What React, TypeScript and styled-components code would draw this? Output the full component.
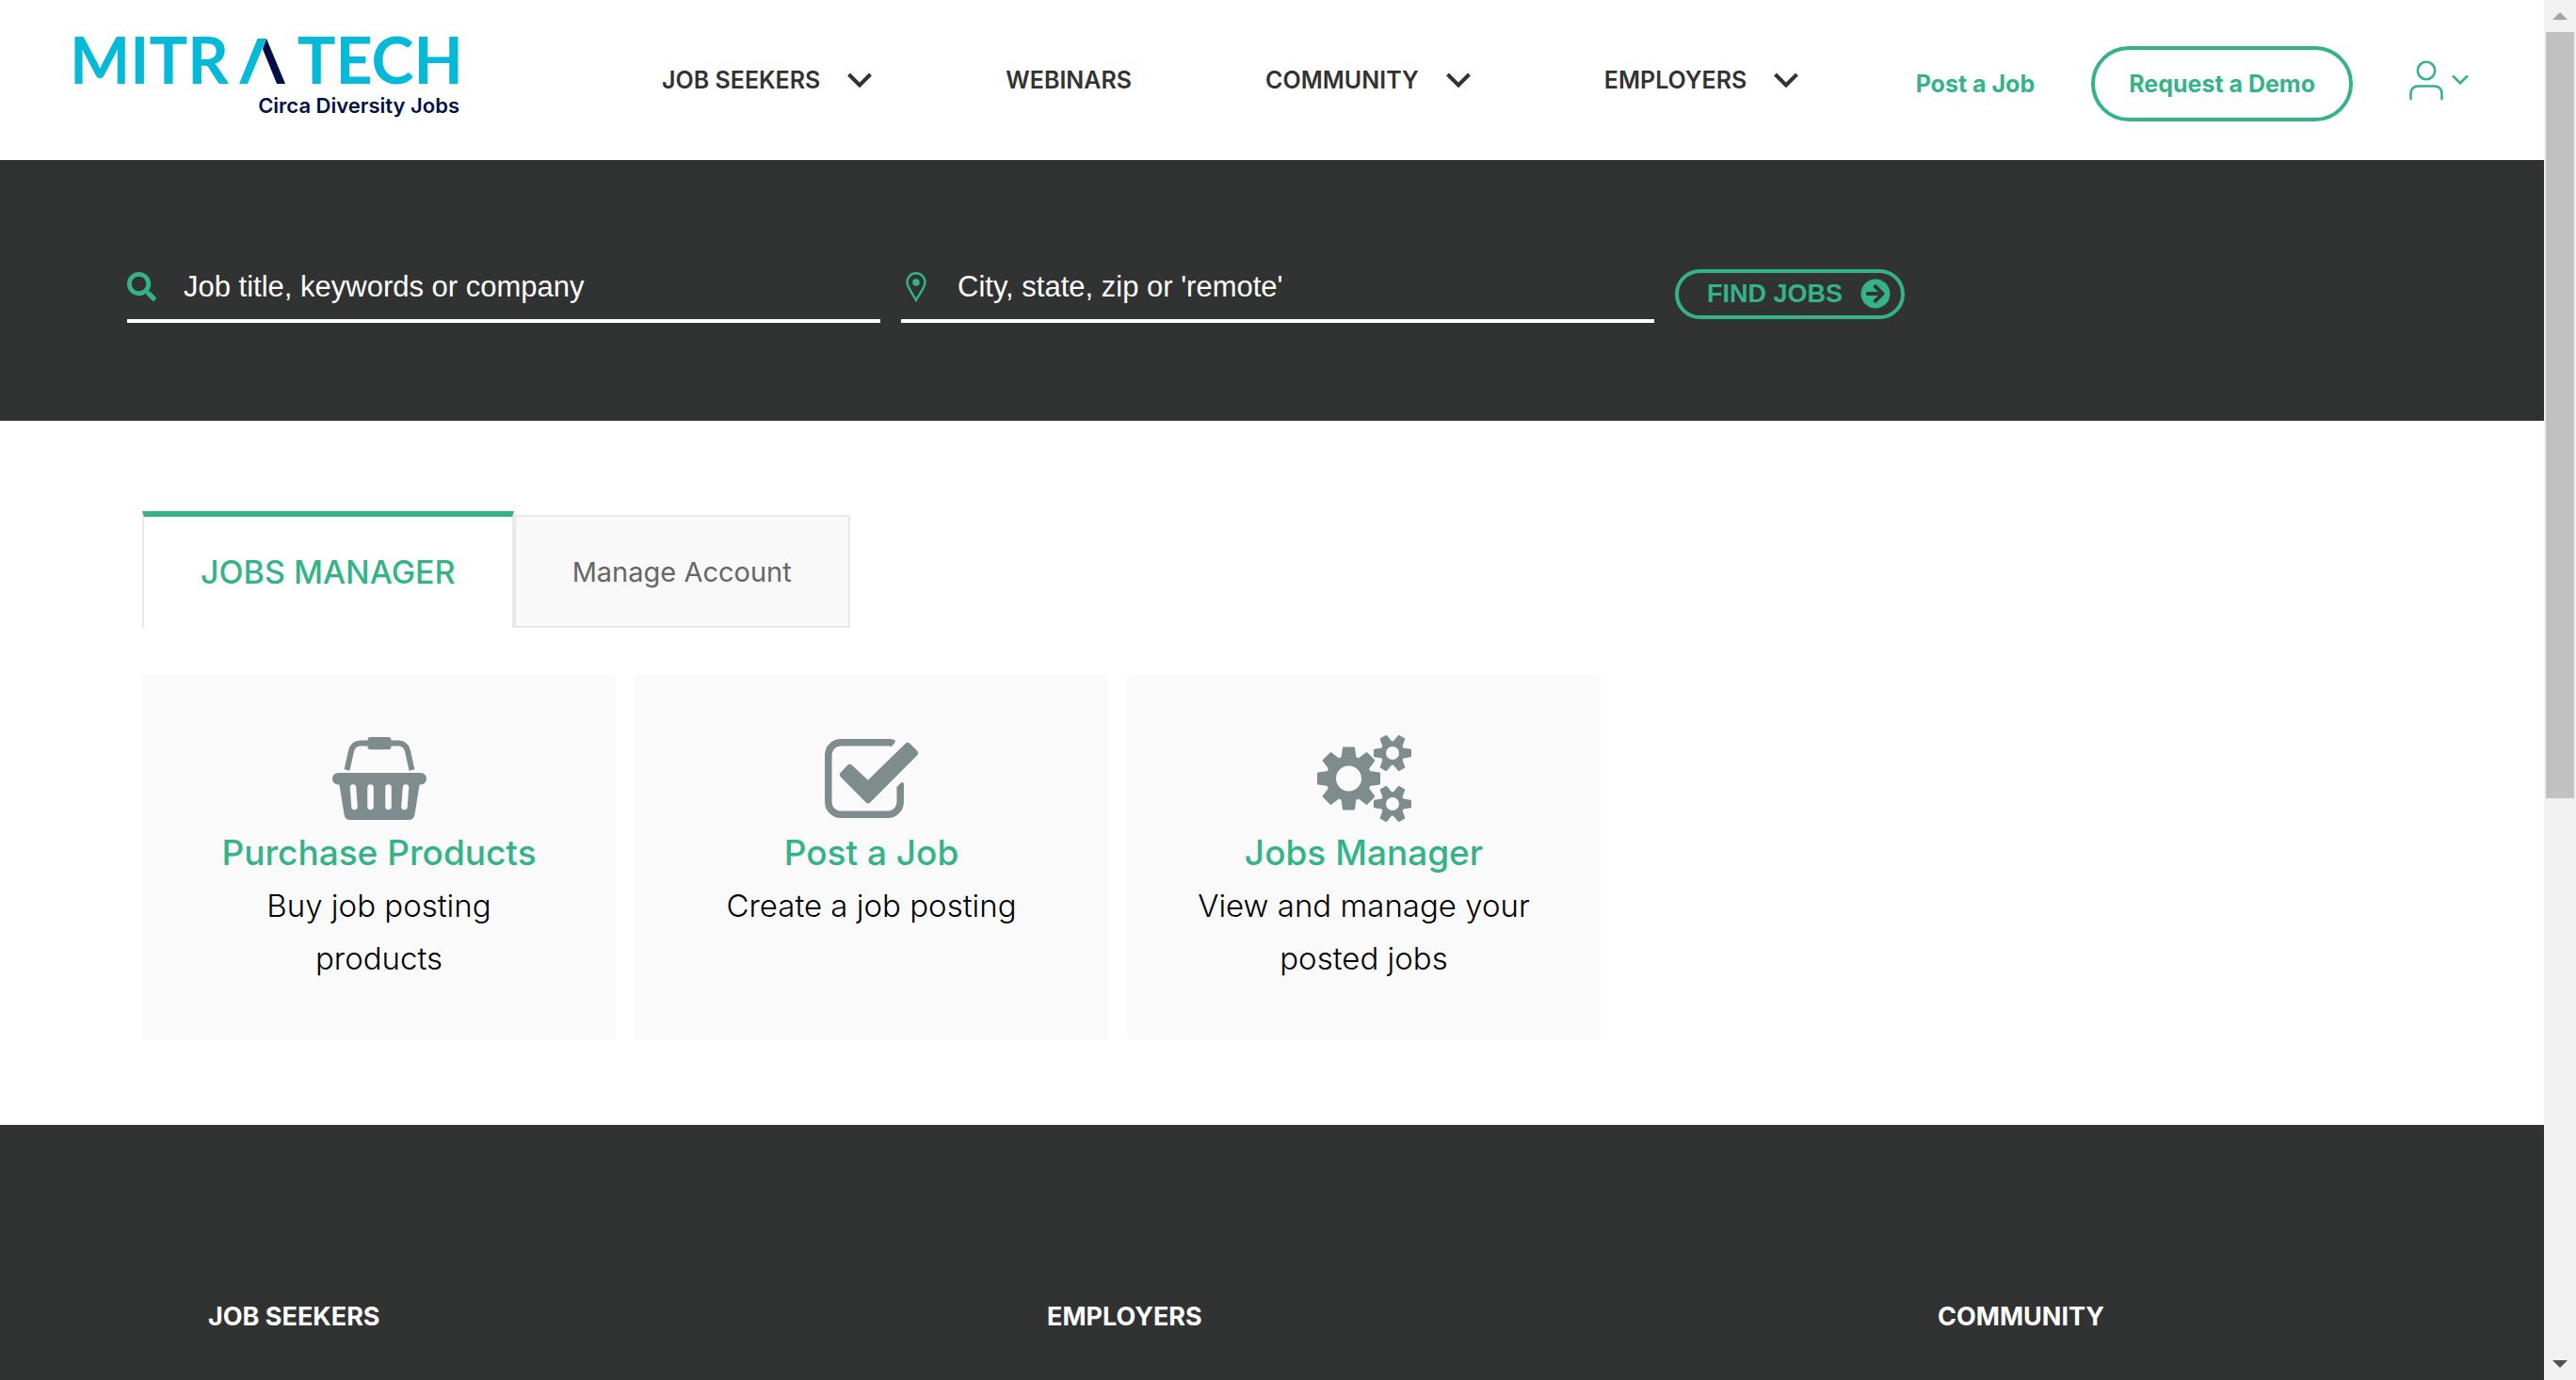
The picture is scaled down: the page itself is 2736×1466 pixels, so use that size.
import React from "react";
import styled, { createGlobalStyle } from "styled-components";
import { FaArrowCircleRight, FaSearch } from "react-icons/fa";

const green = "#34b389";
const charcoal = "#313332";
const slate = "#7f8c8d";
const sans = `Inter, "Noto Sans", sans-serif`;

const GlobalStyle = createGlobalStyle`
  *, *::before, *::after { box-sizing: border-box; }
  body { margin: 0; background: #fff; font-family: ${sans}; }
  a { color: inherit; text-decoration: none; }
  button { font: inherit; color: inherit; background: none; border: 0; padding: 0; cursor: pointer; }
  h2, h3, p { margin: 0; }
  svg { display: block; flex: none; }
`;

const Shell = styled.div`
  display: grid;
  grid-template-columns: minmax(0, 1fr) 34px;
  height: 100vh;
  overflow: hidden;
`;

const Page = styled.div`
  display: flex;
  flex-direction: column;
  min-height: 0;
  overflow: hidden;
`;

const Header = styled.header`
  display: flex;
  align-items: flex-start;
  flex: none;
  height: 170px;
  padding: 40px 80px 0 74px;
`;

const Logo = styled.a`
  display: flex;
  flex-direction: column;
  width: 418px;
  margin-right: 211px;
`;

const Wordmark = styled.span`
  display: flex;
  align-items: baseline;
  justify-content: space-between;
  font: 700 68px/46px Lato, sans-serif;
  color: #05b9d8;
`;

const Tagline = styled.span`
  font-size: 22px;
  font-weight: 600;
  line-height: 28px;
  margin-top: 9px;
  padding-right: 4px;
  text-align: right;
  color: #020f47;
`;

const Nav = styled.nav`
  display: flex;
  gap: 142px;
  padding-top: 30px;
`;

const NavItem = styled.button`
  display: flex;
  align-items: center;
  gap: 29px;
  font-size: 25px;
  font-weight: 600;
  line-height: 30px;
  color: ${charcoal};
`;

const Actions = styled.div`
  display: flex;
  align-items: center;
  gap: 60px;
  height: 80px;
  margin-top: 9px;
  margin-left: auto;
  color: ${green};
  font-size: 25px;
  font-weight: 700;
`;

const DemoLink = styled.a`
  display: flex;
  align-items: center;
  height: 80px;
  padding: 0 36px;
  border: 4px solid ${green};
  border-radius: 40px;
`;

const AccountButton = styled.button`
  display: flex;
  align-items: center;
  gap: 9px;
  padding-bottom: 8px;
`;

const SearchBand = styled.form`
  display: flex;
  align-items: flex-start;
  gap: 22px;
  flex: none;
  height: 277px;
  padding: 112px 135px 0;
  background: ${charcoal};
  color: ${green};
`;

const Field = styled.label`
  display: flex;
  align-items: center;
  gap: 29px;
  flex: 0 1 800px;
  height: 61px;
  padding-bottom: 12px;
  border-bottom: 4px solid #fff;
`;

const FieldIcon = styled.span`
  display: flex;
  justify-content: center;
  width: 31px;
`;

const FieldInput = styled.input`
  flex: 1;
  min-width: 0;
  padding: 0;
  border: 0;
  outline: 0;
  background: transparent;
  color: #fff;
  font: 31px/40px "Liberation Sans", Arial, sans-serif;
  &::placeholder { color: #fff; opacity: 1; }
`;

const FindButton = styled.button`
  display: flex;
  align-items: center;
  gap: 19px;
  height: 53px;
  margin-top: 4px;
  padding: 0 11px 2px 30px;
  border: 4px solid ${green};
  border-radius: 27px;
  font: 700 27px/40px "Liberation Sans", Arial, sans-serif;
`;

const Main = styled.main`
  flex: none;
  padding: 96px 151px 90px;
`;

const Tabs = styled.div`
  display: flex;
  align-items: flex-end;
`;

const Tab = styled.button<{ $active?: boolean }>`
  height: ${(p) => (p.$active ? 124 : 120)}px;
  padding: 0 60px ${(p) => (p.$active ? 2 : 0)}px;
  border: 2px solid #e9e9e9;
  border-width: ${(p) => (p.$active ? "6px 2px 0" : "2px")};
  border-top-color: ${(p) => (p.$active ? green : "#e9e9e9")};
  background: ${(p) => (p.$active ? "#fff" : "#f9f9f9")};
  color: ${(p) => (p.$active ? green : "#666")};
  font-size: ${(p) => (p.$active ? 34 : 29)}px;
  font-weight: ${(p) => (p.$active ? 500 : 400)};
`;

const Cards = styled.div`
  display: flex;
  gap: 20px;
  margin-top: 50px;
`;

const Card = styled.a`
  display: flex;
  flex-direction: column;
  align-items: center;
  flex: 0 1 503px;
  height: 388px;
  padding: 62px 64px 0;
  background: #fafafa;
  text-align: center;
`;

const IconSlot = styled.span`
  display: flex;
  align-items: center;
  height: 96px;
`;

const CardTitle = styled.h3`
  margin-top: 9px;
  font-size: 37px;
  font-weight: 500;
  line-height: 44px;
  color: ${green};
`;

const CardText = styled.p`
  margin-top: 6px;
  font-size: 33px;
  font-weight: 300;
  line-height: 56px;
  color: #000;
`;

const Footer = styled.footer`
  display: grid;
  grid-template-columns: 891fr 946fr 644fr;
  flex: 1 0 auto;
  padding: 187px 0 0 221px;
  background: ${charcoal};
  color: #fff;
`;

const FooterHeading = styled.h2`
  font-size: 27px;
  font-weight: 700;
  line-height: 34px;
`;

const ScrollTrack = styled.div`
  display: flex;
  flex-direction: column;
  padding: 0 2px;
  background: #f1f1f1;
`;

const ScrollArrow = styled.span<{ $color: string }>`
  display: flex;
  align-items: center;
  justify-content: center;
  flex: none;
  height: 34px;
  color: ${(p) => p.$color};
`;

const ScrollRun = styled.div`
  flex: 1;
`;

const ScrollThumb = styled.div`
  height: 58.2%;
  background: #c1c1c1;
`;

const Chevron = ({ width, stroke }: { width: number; stroke: number }) => (
  <svg width={width} height={(width * 16) / 26} viewBox="0 0 26 16" fill="none" stroke="currentColor" strokeWidth={stroke}>
    <path d="M1.5 2 L13 13.5 L24.5 2" />
  </svg>
);

const Peak = () => (
  <svg width="50" height="48" viewBox="0 0 50 48">
    <path d="M0 48 L19.5 0 H29 L9 48Z" fill="#05b9d8" />
    <path d="M29 0 L49 48 H40 L25 11Z" fill="#020f47" />
  </svg>
);

const UserIcon = () => (
  <svg width="36" height="43" viewBox="0 0 36 43" fill="none" stroke="currentColor" strokeWidth="2.6" strokeLinecap="round">
    <circle cx="18" cy="11" r="9.2" />
    <path d="M1.5 41 V36 C1.5 30 5 27.5 10 27.5 H26 C31 27.5 34.5 30 34.5 36 V41" />
  </svg>
);

const PinIcon = () => (
  <svg width="22" height="32" viewBox="0 0 22 32" fill="none" stroke="currentColor" strokeWidth="2.4">
    <path d="M11 30 C7 22 1.5 16.500 1.5 10.800 A9.500 9.500 0 0 1 20.500 10.800 C20.500 16.500 15 22 11 30Z" />
    <circle cx="11" cy="11" r="3.800" fill="currentColor" stroke="none" />
  </svg>
);

const BasketIcon = () => (
  <svg width="100" height="88" viewBox="0 0 100 88" fill={slate}>
    <path d="M15.500 35 L20 15 Q22 6.500 30 6.500 H70 Q78 6.500 80 15 L84.500 35" fill="none" stroke={slate} strokeWidth="6" />
    <rect x="37.500" y="0" width="25" height="13.300" rx="3" />
    <rect x="0" y="38" width="100" height="12.500" rx="6.200" />
    <path d="M7 48 L12.500 82 Q13.500 88 19 88 H81 Q86.500 88 87.500 82 L93 48Z" />
    <path d="M22 53.500 L23.500 74 M40.500 53.500 V74 M59.500 53.500 V74 M78 53.500 L76.500 74" stroke="#fafafa" strokeWidth="6.500" strokeLinecap="round" />
  </svg>
);

const CheckIcon = () => (
  <svg width="100" height="84" viewBox="0 0 100 84" fill={slate}>
    <path d="M70 3.800 H17 A13.200 13.200 0 0 0 3.800 17 V67 A13.200 13.200 0 0 0 17 80.200 H67 A13.200 13.200 0 0 0 80.200 67 V52" fill="none" stroke={slate} strokeWidth="7.500" />
    <path d="M69 0 Q74 .5 75 2 Q75 3.500 71 8 H69Z M76.500 53 V51 L81 46.500 Q84 45 84 49 V53Z" />
    <path d="M19.500 38 L26.600 30.500 L46 48.500 L88 7.500 L95.500 15 L46 64.700Z" stroke={slate} strokeWidth="7" strokeLinejoin="round" />
  </svg>
);

/** Closed outline of a cog: each tooth tapers from its base to its tip. */
const cogPath = (cx: number, cy: number, teeth: number, tip: number, root: number, tipHalf: number, rootHalf: number) => {
  const points: string[] = [];
  for (let i = 0; i < teeth; i += 1) {
    const angle = (i * 2 * Math.PI) / teeth;
    const put = (r: number, side: number) =>
      points.push(
        `${(cx + r * Math.cos(angle) - side * Math.sin(angle)).toFixed(2)} ${(cy + r * Math.sin(angle) + side * Math.cos(angle)).toFixed(2)}`
      );
    put(root, -rootHalf);
    put(tip, -tipHalf);
    put(tip, tipHalf);
    put(root, rootHalf);
  }
  return `M${points.join(" L")}Z`;
};

const GearsIcon = () => (
  <svg width="100" height="92" viewBox="0 0 100 92" fill={slate} stroke={slate} strokeWidth="2" strokeLinejoin="round">
    <path d={cogPath(33.5, 46, 8, 32.5, 22, 5.5, 7)} />
    <path d={cogPath(80, 19, 6, 19, 11, 3.2, 4.6)} />
    <path d={cogPath(80, 73, 6, 19, 11, 3.2, 4.6)} />
    <g fill="#fafafa" stroke="none">
      <circle cx="33.500" cy="46" r="13.500" />
      <circle cx="80" cy="19" r="7" />
      <circle cx="80" cy="73" r="7" />
    </g>
  </svg>
);

const navItems = [
  { label: "JOB SEEKERS", menu: true },
  { label: "WEBINARS", menu: false },
  { label: "COMMUNITY", menu: true },
  { label: "EMPLOYERS", menu: true },
];

const cards = [
  { title: "Purchase Products", text: "Buy job posting products", icon: <BasketIcon /> },
  { title: "Post a Job", text: "Create a job posting", icon: <CheckIcon /> },
  { title: "Jobs Manager", text: "View and manage your posted jobs", icon: <GearsIcon /> },
];

export default function App() {
  return (
    <>
      <GlobalStyle />
      <Shell>
        <Page>
          <Header>
            <Logo href="#home">
              <Wordmark>
                <span>MITR</span>
                <Peak />
                <span>TECH</span>
              </Wordmark>
              <Tagline>Circa Diversity Jobs</Tagline>
            </Logo>
            <Nav>
              {navItems.map((item) => (
                <NavItem key={item.label} type="button">
                  {item.label}
                  {item.menu && <Chevron width={26} stroke={4} />}
                </NavItem>
              ))}
            </Nav>
            <Actions>
              <a href="#post">Post a Job</a>
              <DemoLink href="#demo">Request a Demo</DemoLink>
              <AccountButton type="button" aria-label="Account">
                <UserIcon />
                <Chevron width={18} stroke={4} />
              </AccountButton>
            </Actions>
          </Header>

          <SearchBand>
            <Field>
              <FieldIcon><FaSearch size={31} /></FieldIcon>
              <FieldInput aria-label="Keywords" placeholder="Job title, keywords or company" />
            </Field>
            <Field>
              <FieldIcon><PinIcon /></FieldIcon>
              <FieldInput aria-label="Location" placeholder="City, state, zip or 'remote'" />
            </Field>
            <FindButton type="button">
              FIND JOBS
              <FaArrowCircleRight size={32} />
            </FindButton>
          </SearchBand>

          <Main>
            <Tabs>
              <Tab type="button" $active>JOBS MANAGER</Tab>
              <Tab type="button">Manage Account</Tab>
            </Tabs>
            <Cards>
              {cards.map((card) => (
                <Card key={card.title} href="#card">
                  <IconSlot>{card.icon}</IconSlot>
                  <CardTitle>{card.title}</CardTitle>
                  <CardText>{card.text}</CardText>
                </Card>
              ))}
            </Cards>
          </Main>

          <Footer>
            <FooterHeading>JOB SEEKERS</FooterHeading>
            <FooterHeading>EMPLOYERS</FooterHeading>
            <FooterHeading>COMMUNITY</FooterHeading>
          </Footer>
        </Page>

        <ScrollTrack aria-hidden="true">
          <ScrollArrow $color="#a3a3a3">
            <svg width="16" height="8" viewBox="0 0 16 8" fill="currentColor"><path d="M8 0 L16 8 H0Z" /></svg>
          </ScrollArrow>
          <ScrollRun>
            <ScrollThumb />
          </ScrollRun>
          <ScrollArrow $color="#505050">
            <svg width="16" height="8" viewBox="0 0 16 8" fill="currentColor"><path d="M0 0 H16 L8 8Z" /></svg>
          </ScrollArrow>
        </ScrollTrack>
      </Shell>
    </>
  );
}
